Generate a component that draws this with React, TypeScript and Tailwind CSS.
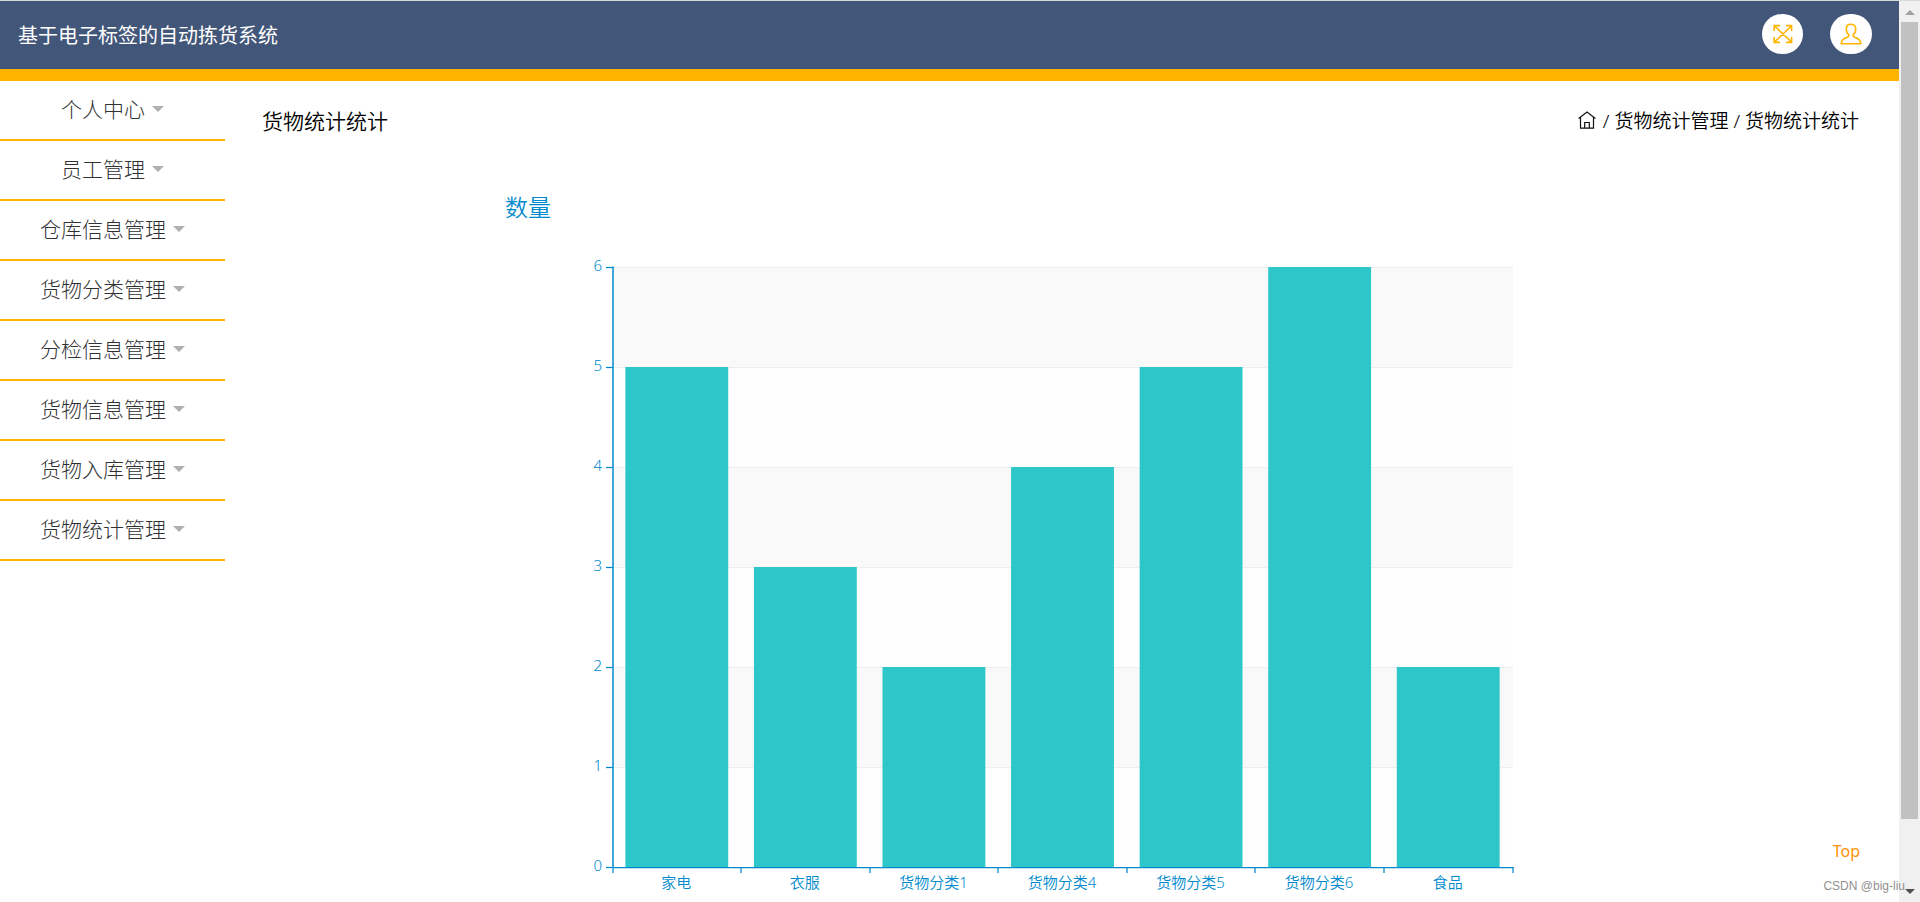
import { useState } from 'react';

const menus = [
    '个人中心',
    '员工管理',
    '仓库信息管理',
    '货物分类管理',
    '分检信息管理',
    '货物信息管理',
    '货物入库管理',
    '货物统计管理'
];

const data = [
    { name: '家电', value: 5 },
    { name: '衣服', value: 3 },
    { name: '货物分类1', value: 2 },
    { name: '货物分类4', value: 4 },
    { name: '货物分类5', value: 5 },
    { name: '货物分类6', value: 6 },
    { name: '食品', value: 2 }
];

const FullscreenIcon = () => (
    <svg width="20" height="20" viewBox="0 0 20 20" fill="none" stroke="#ffb400" strokeWidth="1.6">
        <path d="M1.2 7V1.6H7M13 1.6h5.6V7M18.6 13v5.4H13M7 18.4H1.2V13M1.5 2l17 16M18.5 2l-17 16" />
    </svg>
);

const UserIcon = () => (
    <svg width="22" height="22" viewBox="0 0 22 22" fill="none" stroke="#ffb400" strokeWidth="1.6" strokeLinejoin="round">
        <path d="M11 1.300c-3.200 0-4.700 1.900-4.700 4.600 0 2.600.8 4.600 2.400 5.800.5.9.2 1.900-.9 2.300C4 15.300 1.300 16.800 1 20.800h20c-.3-4-3-5.500-6.800-6.800-1.100-.4-1.400-1.400-.9-2.300 1.600-1.200 2.400-3.200 2.400-5.800 0-2.700-1.500-4.600-4.700-4.600z" />
    </svg>
);

const HomeIcon = () => (
    <svg width="18" height="18" viewBox="0 0 18 18" fill="none" stroke="#111" strokeWidth="1.2">
        <path d="M.6 7.400L9 1l8.400 6.400M2.500 6.200v10.900h13V6.200M6.700 17v-5.500h4.600V17" />
    </svg>
);

const BarChart = () => {
    const left = 113;
    const top = 80;
    const width = 900;
    const step = 100;
    const bottom = top + step * 6;
    const col = width / data.length;

    return (
        <svg
            width="1125"
            height="720"
            viewBox="0 0 1125 720"
            role="img"
            aria-label="数量"
            className="shrink-0 font-['Noto_Sans','Noto_Sans_CJK_SC',sans-serif] font-[350]"
        >
            <text x="5" y="29" fontSize="23" fill="#008acd">数量</text>

            {/* split area */}
            {[0, 1, 2, 3, 4, 5].map((i) => (
                <g key={i}>
                    <rect x={left} y={top + i * step} width={width} height={step} fill={i % 2 === 0 ? '#f9f9f9' : '#fefefe'} />
                    <path d={`M${left} ${top + i * step + 0.5}h${width}`} stroke="#eee" />
                </g>
            ))}

            {/* bars */}
            {data.map((d, i) => (
                <rect
                    key={d.name}
                    x={left + i * col + col * 0.1 - 0.5}
                    y={bottom - d.value * step}
                    width={col * 0.8}
                    height={d.value * step}
                    fill="#2ec7c9"
                />
            ))}

            {/* y axis */}
            {[0, 1, 2, 3, 4, 5, 6].map((v) => (
                <g key={v}>
                    <path d={`M${left - 7} ${bottom - v * step + 0.5}h7`} stroke="#008acd" strokeWidth="1.25" />
                    <text x={left - 11} y={bottom - v * step + 4} textAnchor="end" fontSize="15" fill="#008acd">{v}</text>
                </g>
            ))}
            <path d={`M${left} ${top - 0.5}V${bottom + 1}`} stroke="#008acd" strokeWidth="1.5" />

            {/* x axis */}
            <path d={`M${left} ${bottom + 0.5}h${width + 0.5}`} stroke="#008acd" strokeWidth="1.25" />
            {[...data, null].map((_, i) => (
                <path key={i} d={`M${Math.floor(left + i * col)} ${bottom}v6`} stroke="#008acd" strokeWidth="1.25" />
            ))}
            {data.map((d, i) => (
                <text key={d.name} x={left - 1 + (i + 0.5) * col} y={bottom + 21} textAnchor="middle" fontSize="15" fill="#008acd">
                    {d.name}
                </text>
            ))}
        </svg>
    );
};

const App = () => {
    const [active, setActive] = useState('货物统计管理');

    return (
        <div className="relative flex h-screen overflow-hidden bg-white font-['Noto_Sans','Noto_Sans_CJK_SC',sans-serif] text-black">
            <div className="flex min-w-0 flex-1 flex-col">
                {/* Header */}
                <header className="flex h-[81px] shrink-0 items-start justify-between border-t border-b-12 border-t-[#d5dad8] border-b-[#ffb400] bg-[#425679] pt-[13px] pr-[27px] pl-[18px]">
                    <h1 className="text-[20px] leading-[44px] text-white">基于电子标签的自动拣货系统</h1>
                    <div className="flex gap-[27px]">
                        <button aria-label="全屏" className="flex h-10 w-[41px] items-center justify-center rounded-full bg-white">
                            <FullscreenIcon />
                        </button>
                        <button aria-label="用户" className="flex h-10 w-[42px] items-center justify-center rounded-full bg-white">
                            <UserIcon />
                        </button>
                    </div>
                </header>

                <div className="flex min-h-0 flex-1">
                    {/* Sidebar */}
                    <nav className="w-[225px] shrink-0">
                        {menus.map((m) => (
                            <button
                                key={m}
                                onClick={() => setActive(m)}
                                aria-current={active === m}
                                className="flex h-[60px] w-full items-center justify-center gap-[7px] border-b-2 border-[#ffb400] pb-[2px] text-[21px] leading-6 font-light text-[#303133]"
                            >
                                {m}
                                <span className="border-x-6 border-t-6 border-x-transparent border-t-[#b0b0b0]"></span>
                            </button>
                        ))}
                    </nav>

                    {/* Content */}
                    <main className="min-w-0 flex-1 font-[350]">
                        <div className="flex h-20 items-center justify-between pr-10 pl-[37px]">
                            <h2 className="text-[21px] leading-6 font-[350]">货物统计统计</h2>
                            <div className="flex items-center gap-[5px] text-[19px] leading-6">
                                <a href="#" aria-label="首页" className="pr-[2px] pb-[2px]"><HomeIcon /></a>
                                <span>/</span>
                                <a href="#">货物统计管理</a>
                                <span>/</span>
                                <span>货物统计统计</span>
                            </div>
                        </div>
                        <div className="flex justify-center pt-[26px]">
                            <BarChart />
                        </div>
                    </main>
                </div>
            </div>

            {/* Scrollbar */}
            <div className="flex w-[21px] shrink-0 flex-col items-center justify-between border-t border-[#d5dad8] bg-[#f0f0f0] pt-[9px] pb-2">
                <span className="border-x-5 border-b-5 border-x-transparent border-b-[#a0a0a0]"></span>
                <div className="mt-[7px] mb-[70px] w-[17px] flex-1 bg-[#c1c1c1]"></div>
                <span className="border-x-5 border-t-5 border-x-transparent border-t-[#505050]"></span>
            </div>

            <a href="#" className="absolute right-[60px] bottom-[39px] text-[16px] leading-6 text-[#ff9000]">Top</a>
            <span className="absolute right-[15px] bottom-2 font-['Liberation_Sans',sans-serif] text-[12px] leading-4 text-[#909090]">CSDN @big-liu</span>
        </div>
    );
};

export default App;
